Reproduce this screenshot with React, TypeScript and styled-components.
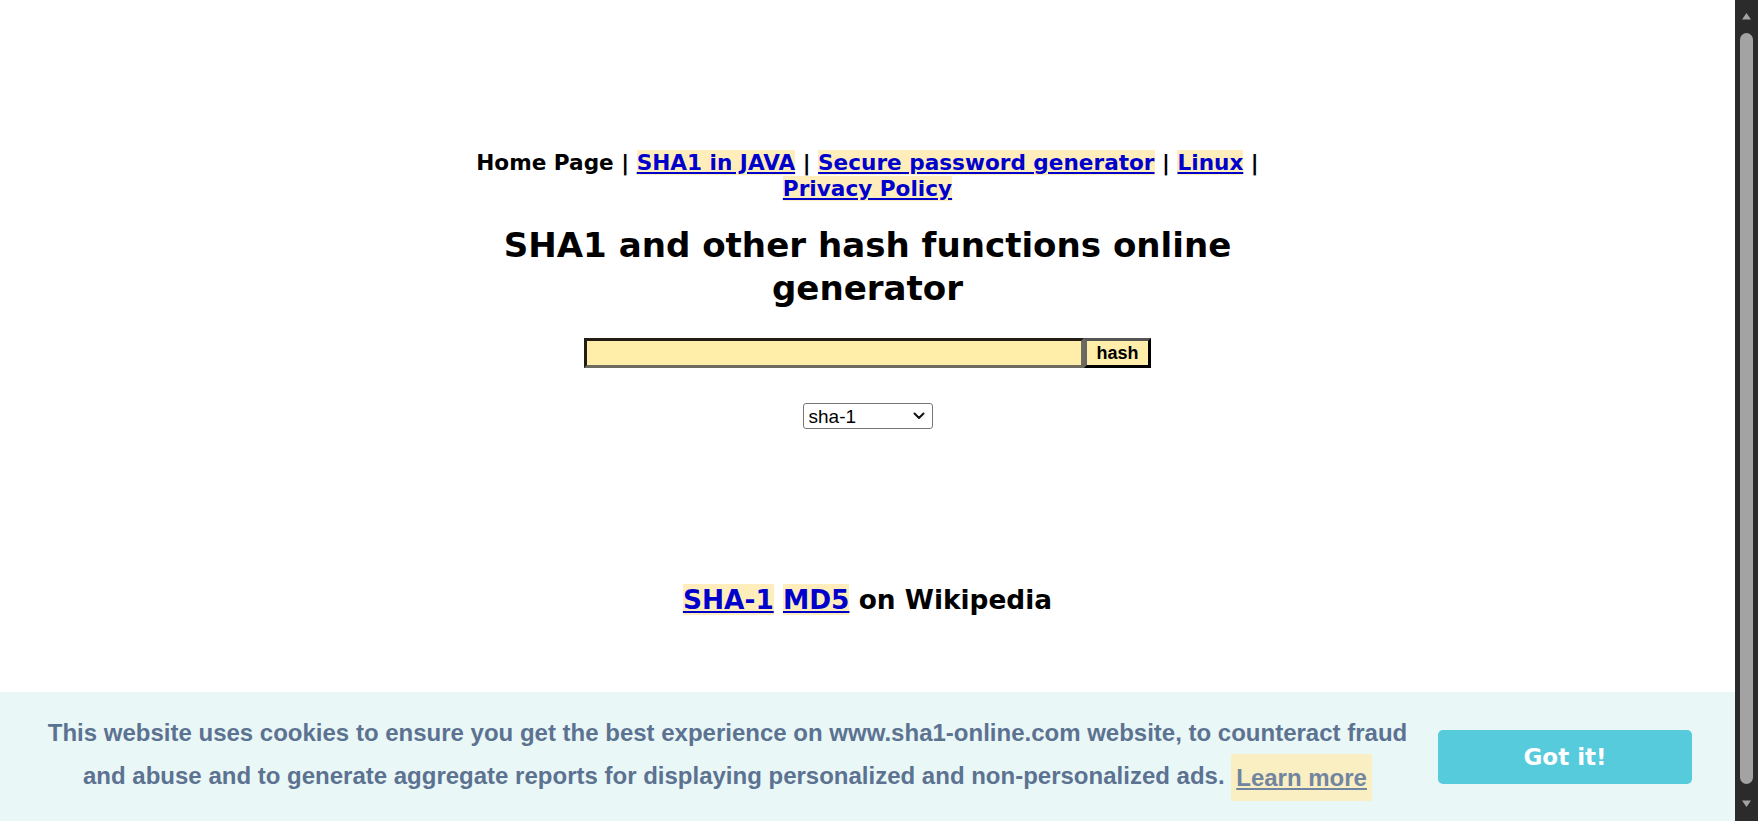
import React from "react";
import styled, { createGlobalStyle } from "styled-components";

const SCROLLBAR = 23;

const GlobalStyle = createGlobalStyle`
  html {
    overflow: hidden;
  }
  body {
    margin: 0;
    background: #ffffff;
    color: #000000;
    font-family: "DejaVu Sans", Verdana, sans-serif;
  }
`;

const Page = styled.div`
  width: calc(100% - ${SCROLLBAR}px);
  min-height: 821px;
`;

const Main = styled.main`
  width: 800px;
  margin: 0 auto;
  padding-top: 150px;
  text-align: center;
`;

const Nav = styled.nav`
  font-size: 21.6px;
  line-height: 26px;
  font-weight: bold;
`;

const HighlightLink = styled.a`
  color: #0000cc;
  background: #ffeebb;
  text-decoration: underline;
`;

const Title = styled.h1`
  margin: 22px 0 0;
  font-size: 34.1px;
  line-height: 43px;
  font-weight: bold;
`;

const HashForm = styled.form`
  display: flex;
  justify-content: center;
  margin-top: 28px;
`;

const HashInput = styled.input`
  box-sizing: border-box;
  width: 500px;
  height: 30px;
  margin: 0;
  background: #ffeeaa;
  border-style: solid;
  border-width: 3px;
  border-color: #231d14 #6e6a5e #6e6a5e #231d14;
  outline: none;
`;

const HashButton = styled.button`
  box-sizing: border-box;
  width: 67px;
  height: 30px;
  margin: 0;
  padding: 0;
  background: #ffeeaa;
  border-style: solid;
  border-width: 3px;
  border-color: #555555 #000000 #000000 #666666;
  font-family: "Liberation Sans", Arial, sans-serif;
  font-size: 18px;
  font-weight: bold;
  color: #000000;
`;

const AlgoRow = styled.div`
  margin-top: 35px;
  display: flex;
  justify-content: center;
`;

const SelectWrap = styled.div`
  position: relative;
  width: 130px;
  height: 26px;
`;

const AlgoSelect = styled.select`
  appearance: none;
  -webkit-appearance: none;
  box-sizing: border-box;
  width: 130px;
  height: 26px;
  margin: 0;
  font-family: "Liberation Sans", Arial, sans-serif;
  font-size: 19px;
  color: #000;
  background: #fff;
  border: 1px solid #767676;
  border-radius: 3px;
  padding: 0 24px 0 5px;
`;

const Chevron = styled.svg`
  position: absolute;
  right: 8px;
  top: 9px;
  width: 12px;
  height: 8px;
  pointer-events: none;
`;

const WikiLine = styled.h2`
  margin: 155px 0 0;
  font-size: 26.4px;
  line-height: 32px;
  font-weight: bold;
`;

const CookieBar = styled.div`
  position: fixed;
  left: 0;
  right: ${SCROLLBAR}px;
  bottom: 0;
  height: 129px;
  box-sizing: border-box;
  display: flex;
  align-items: center;
  padding: 0 43px 0 39px;
  background: #eaf7f7;
  color: #5c7291;
  font-family: "Liberation Sans", Arial, sans-serif;
  font-size: 24px;
  font-weight: bold;
`;

const CookieMessage = styled.span`
  flex: 1;
  margin-right: 22px;
  text-align: center;
  line-height: 42px;
`;

const LearnMore = styled.a`
  display: inline-block;
  padding: 7px 5px;
  line-height: 33px;
  background: #fdeebb;
  color: #5c7291;
  opacity: 0.85;
  text-decoration: underline;
  vertical-align: middle;
`;

const GotIt = styled.a`
  box-sizing: border-box;
  width: 254px;
  height: 54px;
  display: flex;
  align-items: center;
  justify-content: center;
  background: #56cbdb;
  color: #ffffff;
  border-radius: 5px;
  font-family: "DejaVu Sans", Verdana, sans-serif;
  font-size: 23px;
  font-weight: bold;
  text-decoration: none;
`;

const Scrollbar = styled.div`
  position: fixed;
  top: 0;
  right: 0;
  bottom: 0;
  width: ${SCROLLBAR}px;
  background: #2b2b2b;
  display: flex;
  flex-direction: column;
  align-items: center;
  padding: 12px 0 13px;
  box-sizing: border-box;
`;

const ScrollArrow = styled.svg`
  width: 11px;
  height: 9px;
  flex: none;
`;

const ScrollThumb = styled.div`
  flex: 1;
  width: 13px;
  margin: 12px 0 15px;
  border-radius: 7px;
  background: #a3a3a3;
`;

export default function App() {
  return (
    <Page>
      <GlobalStyle />
      <Main>
        <Nav>
          Home Page | <HighlightLink href="#">SHA1 in JAVA</HighlightLink> |{" "}
          <HighlightLink href="#">Secure password generator</HighlightLink> |{" "}
          <HighlightLink href="#">Linux</HighlightLink> |{" "}
          <HighlightLink href="#">Privacy Policy</HighlightLink>
        </Nav>
        <Title>SHA1 and other hash functions online generator</Title>
        <HashForm onSubmit={(e) => e.preventDefault()}>
          <HashInput type="text" />
          <HashButton type="submit">hash</HashButton>
        </HashForm>
        <AlgoRow>
          <SelectWrap>
            <AlgoSelect defaultValue="sha-1">
              <option value="sha-1">sha-1</option>
              <option value="md5">md5</option>
              <option value="sha-256">sha-256</option>
              <option value="sha-384">sha-384</option>
              <option value="sha-512">sha-512</option>
            </AlgoSelect>
            <Chevron viewBox="0 0 12 8" aria-hidden="true">
              <path
                d="M1.5 1.5 L6 6 L10.5 1.5"
                fill="none"
                stroke="#111"
                strokeWidth="2"
                strokeLinecap="round"
                strokeLinejoin="round"
              />
            </Chevron>
          </SelectWrap>
        </AlgoRow>
        <WikiLine>
          <HighlightLink href="#">SHA-1</HighlightLink>{" "}
          <HighlightLink href="#">MD5</HighlightLink> on Wikipedia
        </WikiLine>
      </Main>
      <CookieBar>
        <CookieMessage>
          This website uses cookies to ensure you get the best experience on
          www.sha1-online.com website, to counteract fraud and abuse and to
          generate aggregate reports for displaying personalized and
          non-personalized ads. <LearnMore href="#">Learn more</LearnMore>
        </CookieMessage>
        <GotIt href="#">Got it!</GotIt>
      </CookieBar>
      <Scrollbar aria-hidden="true">
        <ScrollArrow viewBox="0 0 11 9">
          <path d="M1 7.5 L5.5 1 L10 7.5 Z" fill="#a3a3a3" />
        </ScrollArrow>
        <ScrollThumb />
        <ScrollArrow viewBox="0 0 11 9">
          <path d="M1 1.5 L10 1.5 L5.5 8 Z" fill="#a3a3a3" />
        </ScrollArrow>
      </Scrollbar>
    </Page>
  );
}
